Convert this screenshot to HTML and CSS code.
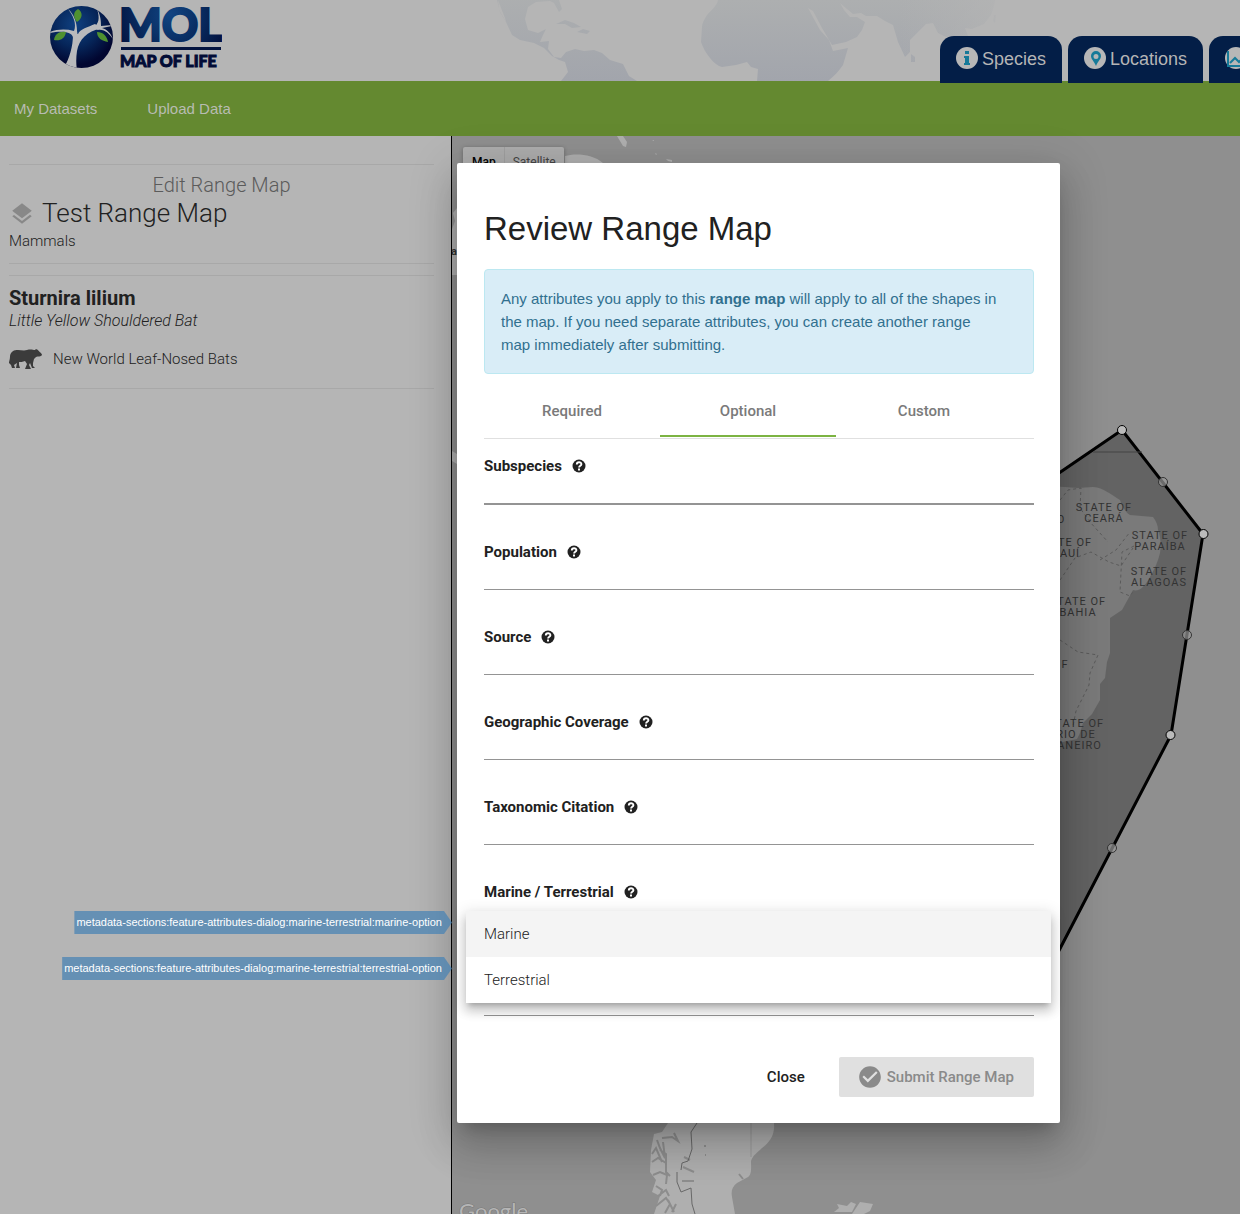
FILE: index.html
```html
<!DOCTYPE html>
<html lang="en">
<head>
<meta charset="utf-8">
<title>Map of Life - Review Range Map</title>
<link rel="stylesheet" href="styles.css">
</head>
<body>
<header class="site-header">
  <svg class="world" width="560" height="81" viewBox="460 0 560 81" aria-hidden="true">
    <defs>
      <linearGradient id="land" x1="0" y1="0" x2="0" y2="1"><stop offset="0" stop-color="#adafb0"/><stop offset="1" stop-color="#a2a5ac"/></linearGradient>
      <linearGradient id="landFade" gradientUnits="userSpaceOnUse" x1="900" y1="0" x2="1000" y2="0"><stop offset="0" stop-color="#b5b5b5" stop-opacity="0"/><stop offset="1" stop-color="#b5b5b5" stop-opacity=".7"/></linearGradient>
    </defs>
    <path fill="url(#land)" d="M497 0l3 12 6 10 6 13 8 5 14 3 10 5 8 8 7 4 6 2 3 10-7 9h76l-8-5-6-12-13-4-8-7-8-3-10 1-9-2-9 3-5 6-7-1-6-8 1-8-9 1 3-7 3-6-8 4-10-3-3-11 3-12 8-5 14-1 4 2 5 9 3-3-3-9 6-4 1-2zM556 24l9-4 9 3 7 4-9 1-7-4zM577 32l6-3 7 2-3 3z"/>
    <path fill="#b5b5b5" d="M498 0l7 18 1 4-7-12zM770 0l10 2-4-2z"/>
    <path id="old-world" fill="url(#land)" d="M718 0C717 6 711 10 707 15C704 20 702 23 702 27L701 42C703 48 706 53 710 58C714 63 718 66 722 67L736 65L747 62L751 67L758 69L757 81H828C834 76 839 71 843 65L848 48L833 51L829 40L820 30L808 8L813 11L822 28L832 45L846 42L857 37L862 30L865 22L857 17L850 17L844 10L840 3L847 9L853 14L861 13L866 16L877 16L885 21L893 25L898 42L905 57L910 52L910 40L919 31L926 24L933 23L938 33L948 38L968 36L965 28L972 29L984 24L991 15L994 6L995 0zM911 54l4 3 0 5-4 0zM994 15l2 0-1 8-2-2z"/>
    <rect x="900" width="120" height="81" fill="url(#landFade)"/>
  </svg>
  <a class="logo" href="#" aria-label="Map of Life">
    <svg width="174" height="66" viewBox="48 4 174 66">
      <defs>
        <radialGradient id="globe" cx=".4" cy=".3" r=".65"><stop offset="0" stop-color="#104181"/><stop offset=".55" stop-color="#06265a"/><stop offset="1" stop-color="#010630"/></radialGradient>
        <radialGradient id="word" gradientUnits="userSpaceOnUse" cx="170" cy="14" r="60"><stop offset="0" stop-color="#114482"/><stop offset=".4" stop-color="#0a3269"/><stop offset="1" stop-color="#02103c"/></radialGradient>
        <clipPath id="disc"><ellipse cx="81.500" cy="37" rx="31.500" ry="31"/></clipPath>
      </defs>
      <ellipse cx="81.500" cy="37" rx="31.500" ry="31" fill="url(#globe)"/>
      <g clip-path="url(#disc)" fill="#b9babc">
        <path d="M63 70c6-11 10-22 10-36l5 0c2-5 10-7 17-10l6 4c-14 4-22 11-24 23-1 7-1 13 0 19z"/>
        <path d="M50 32c8-3 16-3 24-1 3-7-1-16-6-22 6 5 9 14 9 22l1 6h-5c-2-6-13-6-23-4z"/>
        <path d="M93 28c6-4 7-10 4-19 4 7 4 13 4 17l11-1v1l-10 2c6 2 9 6 11 11-4-5-8-10-15-9z"/>
      </g>
      <path fill="#4f9130" d="M78 9c5 3 5 9-1 13-4-5-4-10 1-13zM54 40c1-6 5-9 12-8-1 7-6 9-12 8zM97 32c6 0 10 4 11 10-6-1-11-4-11-10z"/>
      <text class="logo-big" x="119" y="41" fill="url(#word)" stroke="url(#word)">MOL</text>
      <rect x="121" y="47" width="100" height="3" fill="#04143f"/>
      <text class="logo-small" x="120" y="67" fill="#020c36" stroke="#020c36">MAP OF LIFE</text>
    </svg>
  </a>
  <nav class="tabs" aria-label="Sections">
    <a class="tab" href="#"><svg width="22" height="22" viewBox="0 0 22 22"><circle cx="11" cy="11" r="11" fill="#b7b7b7"/><path fill="#167a99" d="M9 4h4v3H9zM8 9h5v7h1v2H8v-2h1v-5H8z"/></svg>Species</a>
    <a class="tab" href="#"><svg width="22" height="22" viewBox="0 0 22 22"><circle cx="11" cy="11" r="11" fill="#b7b7b7"/><path fill="#167a99" fill-rule="evenodd" d="M12 4a5 5 0 0 1 5 5c0 3-3 5-5 10-2-5-5-7-5-10a5 5 0 0 1 5-5zm0 3a2 2 0 1 0 0 5 2 2 0 0 0 0-5z"/></svg>Locations</a>
    <a class="tab" href="#" aria-label="Charts"><svg width="22" height="22" viewBox="0 0 22 22"><circle cx="11" cy="11" r="11" fill="#b7b7b7"/><path fill="none" stroke="#167a99" stroke-width="2" d="M3 4v15h17M5 16l5-5 4 4 6-6"/></svg></a>
  </nav>
</header>
<nav class="subnav" aria-label="Datasets">
  <a href="#">My Datasets</a>
  <a href="#">Upload Data</a>
</nav>
<main class="workspace">
  <aside class="sidebar">
    <section class="panel">
      <p class="kicker">Edit Range Map</p>
      <h1 class="map-name"><svg width="26" height="26" viewBox="0 0 24 24" fill="#888"><path d="M11.990 18.540l-7.370-5.730L3 14.070l9 7 9-7-1.630-1.270zM12 16l7.360-5.730L21 9l-9-7-9 7 1.630 1.270z"/></svg>Test Range Map</h1>
      <p class="group">Mammals</p>
    </section>
    <section class="panel species">
      <h2 class="latin">Sturnira lilium</h2>
      <p class="common">Little Yellow Shouldered Bat</p>
      <p class="family"><svg width="33" height="20" viewBox="0 0 33 20" fill="#3b3b3b"><path d="M1 7c1-5 4-6 8-6 3 0 6 1 9 0 4-1 6 0 8 0l1-1 2 1c1 2 4 3 4 5-1 2-4 1-6 2l-2 2-1 4v3l2 2h-3l-2-5-1 2 2 4h-6l2-5-2-3c-2 1-5 1-6 1v3l1 3H7l1-5-3 2 1 3H3l-1-3-2-2c0-2 1-3 1-7z"/></svg>New World Leaf-Nosed Bats</p>
    </section>
  </aside>
  <div class="map">
    <svg class="map-canvas" viewBox="452 136 788 1078" preserveAspectRatio="xMinYMin slice" aria-label="Range map">
      <g fill="#afafaf">
        <path d="M617 136l6 0 4 6-1 5-3-1zM652 140h2v1zM655 153l2 1-1 1zM666 159l6 1 0 2-4-1zM565 156c10-3 28-2 38 7h-38zM457 208l-4 5 2 8-3 8v46h5zM452 451l5 3v10l-5-3z"/>
        <path d="M1050 486L1078 488L1093 487C1104 488 1110 494 1120 500C1122 506 1125 512 1130 515L1153 517C1156 521 1158 525 1158 530C1161 538 1161 546 1160 553C1158 562 1154 570 1150 577C1144 588 1138 592 1133 590L1122 610L1110 618L1110 653L1107 662L1105 678L1100 684L1100 700L1092 714L1083 723L1080 733L1077 739L1062 742L1050 750z"/>
        <path d="M668 1123l-6 9-8 2-3 16-1 22 6 8-4 12 8 4-6 18h81l-3-17c-1-6 0-10 5-14l11-6c4-3 3-10 3-16 2-6 6-8 11-13 8-6 13-13 12-25zM834 1212l5-4-2-4 10 2 4-4 5 2-4 8zM852 1214l8-12 13 2-3 7-6 3z"/>
      </g>
      <g fill="none" stroke="#8d8d8d" stroke-width="2"><path d="M662 1138l10-1 6 4-4-8M657 1140l3 8 5 10-2-16M652 1154l4-6 6 14M652 1162l6-4 8 5M660 1150l6 4v18l4 4M653 1175l7-3 7 3-1 9M656 1186l6 4-2 6M658 1196l8-6 3 6M656 1206l10-8 4 6-5 9M668 1200l6 12M676 1204l-4 8M683 1167l11 5M682 1181h12M684 1157l6 3M704 1146h2M705 1155h1M739 1174l4 5"/></g>
      <path d="M697 1123l-6 9 1 17-4 12-6 2-1 7M677 1172l0 10 4 10 10-4 1 16 3 10" fill="none" stroke="#686868"/>
      <path d="M751 1123v34" stroke="#999"/>
      <path d="M1040 486L1122 430l81 104-32 201-132 254z" fill="#000" fill-opacity=".3" stroke="#000" stroke-width="3"/>
      <path d="M1093 452h49" stroke="#444"/>
      <g fill="none" stroke="#5b5b5b" stroke-dasharray="3 3"><path d="M1060 500l8-10 13-2-1 20 10 14 18 20M1100 560l16-10 14-18M1060 580l15-22 16-6 18 10 12 4 12-18M1134 546l-12 6-2 40 10 4 3-4M1060 640l18 12 20 3-8 18-1 12-13 26-3 15"/></g>
      <g class="vertices" stroke="#000"><circle cx="1122" cy="430" r="4.500"/><circle cx="1203.500" cy="534" r="4.500"/><circle cx="1170.500" cy="735" r="4.500"/></g>
      <g class="midpoints"><circle cx="1163" cy="482" r="4.500"/><circle cx="1187" cy="635" r="4.500"/><circle cx="1112" cy="848" r="4.500"/></g>
      <g class="region" text-anchor="middle">
        <text x="1104" y="511">STATE OF</text><text x="1104" y="522">CEARÁ</text>
        <text x="1160" y="539">STATE OF</text><text x="1160" y="550">PARAÍBA</text>
        <text x="1159" y="575">STATE OF</text><text x="1159" y="586">ALAGOAS</text>
        <text x="1064" y="546">STATE OF</text><text x="1064" y="557">PIAUÍ</text>
        <text x="1078" y="605">STATE OF</text><text x="1078" y="616">BAHIA</text>
        <text x="1076" y="727">STATE OF</text><text x="1076" y="738">RIO DE</text><text x="1076" y="749">JANEIRO</text>
        <text x="1061" y="523">O</text><text x="1065" y="668">F</text>
      </g>
      <text class="place" x="451" y="255">a</text>
      <text class="google" x="459" y="1219">Google</text>
    </svg>
    <div class="map-type"><button type="button" class="on">Map</button><button type="button">Satellite</button></div>
  </div>
</main>
<div class="overlay">
  <form class="dialog" role="dialog" aria-labelledby="dialog-title">
    <h2 class="dialog-title" id="dialog-title">Review Range Map</h2>
    <p class="notice">Any attributes you apply to this <strong>range map</strong> will apply to all of the shapes in the map. If you need separate attributes, you can create another range map immediately after submitting.</p>
    <div class="dialog-tabs" role="tablist">
      <button type="button" role="tab">Required</button>
      <button type="button" role="tab" aria-selected="true">Optional</button>
      <button type="button" role="tab">Custom</button>
    </div>
    <svg class="defs" width="0" height="0" aria-hidden="true"><symbol id="help" viewBox="0 0 14 14"><circle cx="7" cy="7" r="6.500" fill="#212121"/><path d="M4.800 5.500c0-3 4.600-2.900 4.600-.3 0 1.600-2.300 1.600-2.300 3.300" fill="none" stroke="#fff" stroke-width="1.900"/><path d="M6 9.500h2v2H6z" fill="#fff"/></symbol></svg>
    <div class="fields">
      <div class="field focused"><label for="subspecies">Subspecies <svg><use href="#help"/></svg></label><input id="subspecies" type="text"></div>
      <div class="field"><label for="population">Population <svg><use href="#help"/></svg></label><input id="population" type="text"></div>
      <div class="field"><label for="source">Source <svg><use href="#help"/></svg></label><input id="source" type="text"></div>
      <div class="field"><label for="coverage">Geographic Coverage <svg><use href="#help"/></svg></label><input id="coverage" type="text"></div>
      <div class="field"><label for="citation">Taxonomic Citation <svg><use href="#help"/></svg></label><input id="citation" type="text"></div>
      <div class="field choice"><label for="realm">Marine / Terrestrial <svg><use href="#help"/></svg></label><select id="realm"></select>
        <div class="menu" role="listbox" aria-label="Marine / Terrestrial">
          <button type="button" role="option" class="option active">Marine<span class="tag">metadata-sections:feature-attributes-dialog:marine-terrestrial:marine-option</span></button>
          <button type="button" role="option" class="option">Terrestrial<span class="tag">metadata-sections:feature-attributes-dialog:marine-terrestrial:terrestrial-option</span></button>
        </div>
      </div>
    </div>
    <div class="actions">
      <button type="button" class="close">Close</button>
      <button type="submit" class="submit" disabled><svg width="26" height="26" viewBox="0 0 24 24" fill="#8a8a8a"><path d="M12 2C6.480 2 2 6.480 2 12s4.480 10 10 10 10-4.480 10-10S17.520 2 12 2zm-2 15l-5-5 1.410-1.410L10 14.170l7.590-7.590L19 8l-9 9z"/></svg>Submit Range Map</button>
    </div>
  </form>
</div>
</body>
</html>
```
FILE: styles.css
```css
* { box-sizing: border-box; }
body {
  position: relative;
  display: flex;
  flex-direction: column;
  min-height: 100vh;
  margin: 0;
  overflow-x: hidden;
  background: #b5b5b5;
  color: #212121;
  font: 300 15px/23px Roboto, "Liberation Sans", sans-serif;
}
h1, h2, p { margin: 0; }
a { color: inherit; text-decoration: none; }
button { border: 0; margin: 0; padding: 0; background: none; color: inherit; font: inherit; }
svg { flex: none; display: block; }

.site-header {
  position: relative;
  z-index: 1;
  display: flex;
  justify-content: space-between;
  height: 81px;
  padding-left: 48px;
  background: #b5b5b5;
}
.world { position: absolute; left: 460px; top: 0; }
.logo { position: relative; padding-top: 4px; }
.logo-big { font: 900 45px Lato, sans-serif; stroke-width: 2px; }
.logo-small { font: 900 16px Lato, sans-serif; stroke-width: 1px; }
.tabs {
  position: relative;
  display: flex;
  gap: 6px;
  width: 300px;
  height: 47px;
  margin-top: 36px;
  overflow: hidden;
}
.tab {
  display: flex;
  flex: none;
  gap: 4px;
  height: 47px;
  min-width: 100px;
  padding: 11px 16px 0;
  border-radius: 14px 14px 0 0;
  background: #031e47;
  color: #b5b5b5;
  font: 18px/24px "Liberation Sans", Arial, sans-serif;
}

.subnav {
  display: flex;
  gap: 50px;
  padding: 16px 14px;
  background: #648930;
  color: #b8bcb2;
  font-family: "Liberation Sans", Arial, sans-serif;
  font-weight: 400;
}

.workspace { display: flex; flex: 1; }
.sidebar {
  flex: none;
  width: 452px;
  padding: 28px 17px 0 9px;
  border-right: 1px solid #000;
}
.panel {
  padding: 8px 0 10px;
  border-top: 1px solid #a8a8a8;
  border-bottom: 1px solid #a8a8a8;
}
.kicker { color: #5b5b5b; font-size: 20px; line-height: 24px; text-align: center; }
.map-name { display: flex; align-items: center; gap: 7px; font-size: 26px; font-weight: 300; line-height: 33px; }
.species { margin-top: 11px; padding: 11px 0 17px; }
.latin { font-size: 20px; font-weight: 700; line-height: 22px; }
.common { font-size: 16px; font-style: italic; }
.family { display: flex; align-items: center; gap: 11px; margin-top: 15px; line-height: 24px; }

.map { position: relative; flex: 1; overflow: hidden; background: #8f8f8f; }
.map-canvas { position: absolute; inset: 0; width: 100%; height: 100%; }
.vertices { fill: #bbb; }
.midpoints { fill: #999; fill-opacity: .7; stroke: #333; }
.region { fill: #333; font: 400 11px Roboto, sans-serif; letter-spacing: 1px; }
.place { fill: #333; font: 700 11px Roboto, sans-serif; }
.google { fill: #b5b5b5; stroke: #777; paint-order: stroke; font: 400 22px Lato, sans-serif; }
.map-type {
  position: absolute;
  left: 11px;
  top: 11px;
  display: flex;
  border-radius: 2px;
  background: #adadad;
  box-shadow: 0 1px 4px rgba(0, 0, 0, .3);
  font: 400 12px/30px Roboto, sans-serif;
  color: #444;
}
.map-type button { padding: 0 8px; }
.map-type .on { padding-left: 9px; border-right: 1px solid #a0a0a0; color: #000; font-weight: 500; }

.overlay {
  position: absolute;
  z-index: 2;
  inset: 0;
  padding: 163px 180px 90px 457px;
}
.dialog {
  padding: 48px 26px 26px 27px;
  border-radius: 2px;
  background: #fff;
  box-shadow: 0 11px 15px -7px rgba(0, 0, 0, .2), 0 24px 38px 3px rgba(0, 0, 0, .14), 0 9px 46px 8px rgba(0, 0, 0, .12);
}
.dialog-title { font: 400 33px/36px "Liberation Sans", Arial, sans-serif; }
.notice {
  margin-top: 22px;
  padding: 17px 32px 17px 16px;
  border: 1px solid #bce8f1;
  border-radius: 4px;
  background: #d9edf7;
  color: #31708f;
  font-family: "Liberation Sans", Arial, sans-serif;
  font-weight: 400;
}
.dialog-tabs {
  display: grid;
  grid-template-columns: repeat(3, 32%);
  margin-top: 14px;
  padding-bottom: 1px;
  border-bottom: 1px solid #e0e0e0;
  color: #7a7a7a;
  font-weight: 500;
  line-height: 47px;
}
.dialog-tabs button { border-bottom: 2px solid transparent; }
.dialog-tabs [aria-selected="true"] { border-color: #7cb342; }
.defs { position: absolute; }
.fields { display: grid; gap: 35px; margin-top: 15px; }
.field { position: relative; display: flex; flex-direction: column; }
.field label { display: flex; align-items: center; gap: 10px; font-weight: 700; line-height: 24px; }
.field label svg { width: 14px; height: 14px; }
.field input, .field select {
  width: 100%;
  height: 26px;
  padding: 0;
  border: 0;
  border-bottom: 1px solid #949494;
  border-radius: 0;
  outline: 0;
  appearance: none;
  background: none;
  font: inherit;
}
.focused input { height: 27px; border-bottom-width: 2px; }
.choice select { height: 112px; }
.menu {
  position: absolute;
  top: 31px;
  left: -18px;
  right: -17px;
  background: #fff;
  box-shadow: 0 5px 5px -3px rgba(0, 0, 0, .2), 0 8px 10px 1px rgba(0, 0, 0, .14), 0 3px 14px 2px rgba(0, 0, 0, .12);
}
.option { position: relative; display: block; width: 100%; padding: 0 18px; line-height: 46px; text-align: left; }
.option.active { background: #f4f4f4; }
.tag {
  position: absolute;
  top: 0;
  right: calc(100% + 14px);
  padding: 0 10px 0 2px;
  background: rgba(70, 130, 180, .72);
  clip-path: polygon(0 0, calc(100% - 8px) 0, 100% 50%, calc(100% - 8px) 100%, 0 100%);
  color: #fff;
  font: 11px/23px "Liberation Sans", Arial, sans-serif;
  white-space: nowrap;
}
.actions { display: flex; justify-content: flex-end; gap: 18px; margin-top: 41px; font-weight: 500; line-height: 39px; }
.close { padding: 0 16px; }
.submit { display: flex; align-items: center; gap: 4px; height: 40px; padding: 0 20px 0 18px; border-radius: 2px; background: #e0e0e0; color: #8a8a8a; }
```
